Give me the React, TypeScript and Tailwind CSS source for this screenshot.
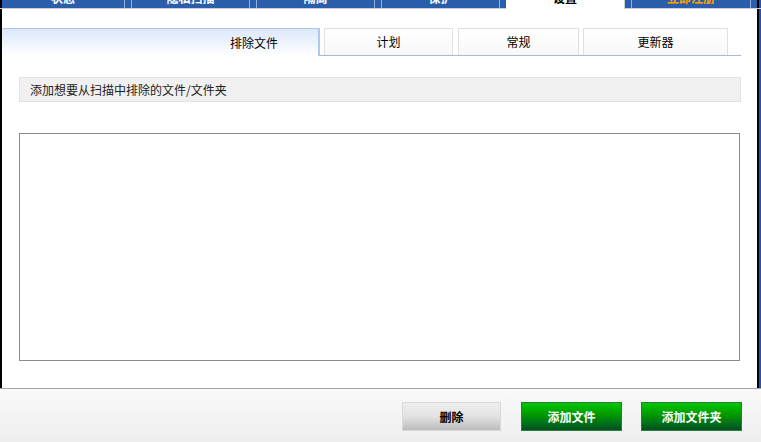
import React from 'react';

const FONT = { fontFamily: '"Noto Sans CJK SC", "Liberation Sans", sans-serif' };

const topTabs = [
  { label: '状态', w: 'w-[123px] border-r' },
  { label: '隐私扫描', w: 'w-[119px] border-x' },
  { label: '隔离', w: 'w-[119px] border-x' },
  { label: '保护', w: 'w-[119px] border-x' },
];

function TopBar() {
  return (
    <div className="flex h-[9px] bg-[#2a5eaa] border-b border-[#c9cfd8]">
      <div className="w-[2px] bg-black" />
      {topTabs.map((t) => (
        <React.Fragment key={t.label}>
          <div className={`${t.w} border-[#8fb0dc] overflow-hidden flex justify-center`}>
            <span className="text-[12px] leading-[12px] mt-[-8px] font-bold text-white">{t.label}</span>
          </div>
          <div className="w-[6px]" />
        </React.Fragment>
      ))}
      {/* active tab */}
      <div className="w-[119px] h-[9px] bg-white border-r border-[#c9cfd8] overflow-hidden flex justify-center">
        <span className="text-[12px] leading-[12px] mt-[-8px] font-bold text-black">设置</span>
      </div>
      <div className="w-[6px]" />
      <div className="w-[120px] border-x border-[#8fb0dc] overflow-hidden flex justify-center">
        <span className="text-[12px] leading-[12px] mt-[-8px] font-bold text-[#ffa200]">立即注册</span>
      </div>
      <div className="w-[6px]" />
      <div className="w-[2px] bg-black" />
      <div className="flex-1 bg-[#1d55b0]" />
    </div>
  );
}

function SubTabs() {
  return (
    <div className="flex items-start h-[28px] mt-[19px]">
      <div className="w-[317px] h-[28px] flex items-center pl-[228px] border-t border-r border-[#a9c6e8] bg-gradient-to-b from-[#dce8fa] to-white shadow-[1px_0_0_#c8c8c8] text-[12px] text-black">
        排除文件
      </div>
      <div className="flex-1 flex flex-col">
        <div className="flex h-[27px] pl-[5px] gap-[5px]">
          <div className="w-[129px] border border-b-0 border-[#e0e0e0] bg-gradient-to-b from-white to-[#f8f8f8] flex items-center justify-center text-[12px] text-black">
            计划
          </div>
          <div className="w-[121px] border border-b-0 border-[#e0e0e0] bg-gradient-to-b from-white to-[#f8f8f8] flex items-center justify-center text-[12px] text-black">
            常规
          </div>
          <div className="w-[145px] border border-b-0 border-[#e0e0e0] bg-gradient-to-b from-white to-[#f8f8f8] flex items-center justify-center text-[12px] text-black ml-[-1px]">
            更新器
          </div>
        </div>
        <div className="w-[422px] h-[1px] bg-[#a3bbd9]" />
      </div>
    </div>
  );
}

export default function App() {
  return (
    <div className="w-[761px] h-[442px] overflow-hidden bg-white relative" style={FONT}>
      <TopBar />
      <div className="flex h-[379px]">
        <div className="w-[2px] bg-black" />
        <div className="flex-1 flex flex-col">
          <SubTabs />
          <div className="ml-[17px] mt-[21px] w-[722px] h-[25px] bg-[#f0f0f0] border border-[#e2e2e2] flex items-center pl-[10px] text-[12px] text-[#222]">
            添加想要从扫描中排除的文件/文件夹
          </div>
          <div className="ml-[17px] mt-[31px] w-[721px] h-[228px] bg-white border border-[#8a8c91]" />
        </div>
        <div className="w-[2px] bg-black" />
        <div className="w-[2px] bg-[#1d55b0]" />
      </div>
      <div className="h-[54px] border-t border-[#a8a8a8] bg-gradient-to-b from-[#f9f9f9] to-[#eeeeee] flex items-start justify-end pr-[19px] pt-[13px]">
        <button className="w-[99px] h-[29px] mr-[20px] border border-[#d9d9d9] bg-gradient-to-b from-[#eeeeee] via-[#e2e2e2] to-[#bcbcbc] text-[12px] font-bold text-black">
          删除
        </button>
        <button className="w-[101px] h-[29px] mr-[19px] border border-[#2f7a3c] bg-gradient-to-b from-[#00c800] via-[#009200] to-[#00501e] text-[12px] font-bold text-white">
          添加文件
        </button>
        <button className="w-[101px] h-[29px] border border-[#2f7a3c] bg-gradient-to-b from-[#00c800] via-[#009200] to-[#00501e] text-[12px] font-bold text-white">
          添加文件夹
        </button>
      </div>
    </div>
  );
}
